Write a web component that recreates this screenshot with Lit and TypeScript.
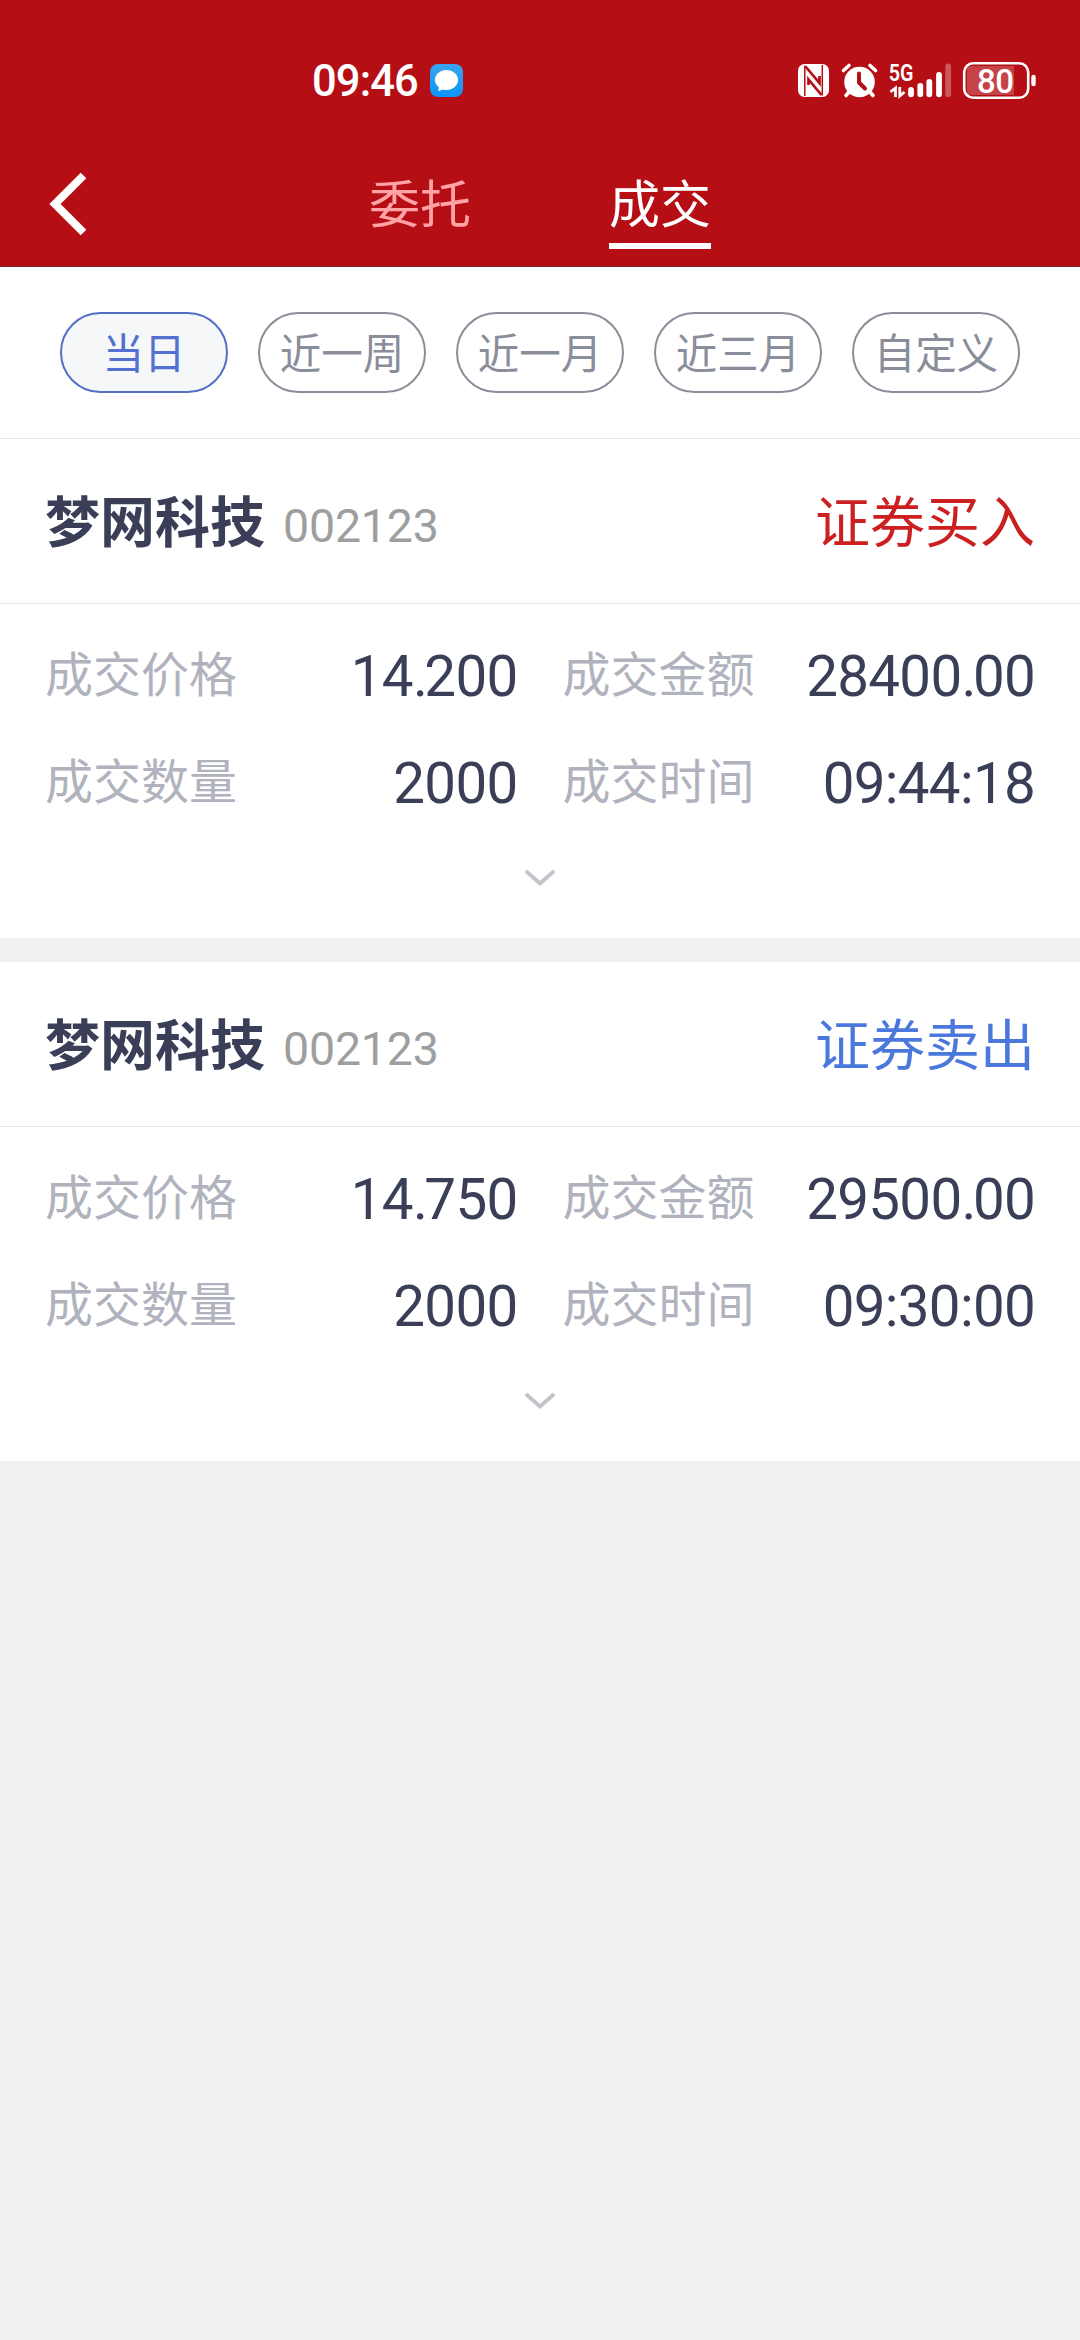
import { LitElement, html, css } from "lit";
import { customElement, property, state } from "lit/decorators.js";
import { classMap } from "lit/directives/class-map.js";

interface Trade {
  name: string;
  code: string;
  side: "buy" | "sell";
  price: string;
  amount: string;
  quantity: string;
  time: string;
}

const TRADES: Trade[] = [
  { name: "梦网科技", code: "002123", side: "buy", price: "14.200", amount: "28400.00", quantity: "2000", time: "09:44:18" },
  { name: "梦网科技", code: "002123", side: "sell", price: "14.750", amount: "29500.00", quantity: "2000", time: "09:30:00" },
];

@customElement("status-bar")
class StatusBar extends LitElement {
  static styles = css`
    :host {
      display: flex;
      justify-content: space-between;
      height: 140px;
      padding: 60px 42px 0 312px;
      box-sizing: border-box;
      color: #fff;
    }
    .left {
      display: flex;
      gap: 11px;
    }
    .clock {
      width: 107px;
      font: 500 43.500px/44px Roboto, sans-serif;
      letter-spacing: -0.900px;
      white-space: nowrap;
    }
    svg {
      display: block;
    }
    .chat {
      margin-top: 4px;
    }
    .net,
    .level {
      font-family: Roboto, sans-serif;
      fill: #fff;
    }
    .net {
      font-size: 23.5px;
      font-weight: 600;
    }
    .level {
      font-size: 33px;
      font-weight: 500;
      letter-spacing: -0.500px;
    }
  `;

  render() {
    return html`
      <div class="left">
        <div class="clock">09:46</div>
        <svg class="chat" width="33" height="33" viewBox="0 0 33 33">
          <defs>
            <linearGradient id="sky" x1="0" y1="0" x2="0" y2="1">
              <stop offset="0" stop-color="#3ba3ee" />
              <stop offset="1" stop-color="#0c95fb" />
            </linearGradient>
          </defs>
          <rect width="33" height="33" rx="8" fill="url(#sky)" />
          <path d="M16.500 6C23 6 28 10.400 28 16S23 26 16.500 26C15 26 13.800 25.800 12.700 25.400L8.300 27.200L8.800 23.300C6.500 21.500 5 19 5 16C5 10.400 10 6 16.500 6Z" fill="#fff" />
        </svg>
      </div>
      <svg width="240" height="42" viewBox="798 60 240 42">
        <rect x="798" y="64" width="31" height="33" rx="6.500" fill="#fff" />
        <path d="M804.800 65.500V96M822.300 65V95.500" stroke="#b50f15" stroke-width="1.500" />
        <path d="M805.500 66.500L819.500 83V76M821.500 95L808.500 79.500V85" fill="none" stroke="#b50f15" stroke-width="2.700" />
        <circle cx="859.500" cy="82" r="15.300" fill="#fff" />
        <path d="M843.500 70.500L849 65.500M875.500 70.500L870 65.500M849 92L846 95.500M870 92L873 95.500" stroke="#fff" stroke-width="3.600" stroke-linecap="round" />
        <path d="M859 73.500V82.500L865 88.500" fill="none" stroke="#b50f15" stroke-width="4" stroke-linecap="round" stroke-linejoin="round" />
        <text class="net" transform="translate(888.700 81) scale(.84 1)">5G</text>
        <path d="M890.500 91.800L895.500 88V97M899.800 87V96L904.500 92" fill="none" stroke="#fff" stroke-width="2.800" />
        <g stroke="#fff" stroke-width="5.800" stroke-linecap="round">
          <path d="M911 90V94.300M920.300 86V94.300M929.300 82V94.300M939 75V94.300" />
          <path d="M948.200 66.500V94.300" opacity=".3" />
        </g>
        <path d="M967 68.500Q967 66 970 66H1014V95H970Q967 95 967 92.500Z" fill="#fff" opacity=".22" />
        <rect x="964.200" y="63.200" width="64" height="34.600" rx="9" fill="none" stroke="#fff" stroke-width="2.600" />
        <path d="M1033.500 77V84" stroke="#fff" stroke-width="4.400" stroke-linecap="round" />
        <text class="level" x="977" y="92.500">80</text>
      </svg>
    `;
  }
}

@customElement("nav-bar")
class NavBar extends LitElement {
  @state() private active = 1;

  static styles = css`
    :host {
      display: grid;
      grid-template-columns: 1fr auto 1fr;
      height: 126px;
      color: #fff;
      font-family: "Noto Sans CJK SC", sans-serif;
    }
    .back {
      display: block;
      margin: 32px 0 0 49px;
    }
    .tabs {
      display: flex;
      gap: 138px;
      align-items: flex-start;
      padding-top: 26px;
    }
    .tab {
      height: 77px;
      border-bottom: 6px solid transparent;
      font-size: 51px;
      line-height: 71px;
      color: #ffa3a7;
    }
    .tab.on {
      color: #fff;
      border-color: #fff;
    }
  `;

  render() {
    return html`
      <svg class="back" width="38" height="64" viewBox="0 0 38 64">
        <path d="M34.500 3.500L6 32L34.500 60.500" fill="none" stroke="#fff" stroke-width="8" />
      </svg>
      <div class="tabs">
        ${["委托", "成交"].map(
          (label, i) => html`<div class=${classMap({ tab: true, on: i === this.active })} @click=${() => (this.active = i)}>${label}</div>`,
        )}
      </div>
    `;
  }
}

@customElement("range-filter")
class RangeFilter extends LitElement {
  @state() private active = 0;

  static styles = css`
    :host {
      display: flex;
      gap: 30px;
      padding: 45px 60px;
      background: #fff;
      border-bottom: 1px solid #e3e4e6;
      font-family: "Noto Sans CJK SC", sans-serif;
    }
    .pill {
      flex: 1;
      height: 81px;
      box-sizing: border-box;
      border: 2px solid #8a8e9a;
      border-radius: 41px;
      font-size: 41.500px;
      line-height: 74px;
      text-align: center;
      white-space: nowrap;
      color: #8a8e9a;
    }
    .pill.on {
      border-color: #526fc5;
      background: #f6f7f9;
      color: #5470d0;
    }
  `;

  render() {
    return html`${["当日", "近一周", "近一月", "近三月", "自定义"].map(
      (label, i) => html`<div class=${classMap({ pill: true, on: i === this.active })} @click=${() => (this.active = i)}>${label}</div>`,
    )}`;
  }
}

@customElement("trade-card")
class TradeCard extends LitElement {
  @property({ attribute: false }) trade!: Trade;

  static styles = css`
    :host {
      display: block;
      background: #fff;
      font-family: "Noto Sans CJK SC", sans-serif;
    }
    .head {
      display: flex;
      align-items: baseline;
      height: 164px;
      padding: 0 45px;
      border-bottom: 1px solid #e3e4e6;
      line-height: 158px;
      font-size: 55px;
    }
    .name {
      font-weight: 700;
      color: #3a3f57;
    }
    .code {
      margin-left: 18px;
      font: 400 46.500px/80px Roboto, sans-serif;
      letter-spacing: -0.200px;
      color: #9e9e9e;
    }
    .side {
      margin-left: auto;
      color: #cb1f20;
    }
    .side.sell {
      color: #4b78dc;
    }
    .fields {
      display: grid;
      grid-template-columns: 1fr 1fr;
      column-gap: 45px;
      padding: 18px 45px 0;
    }
    .field {
      display: flex;
      justify-content: space-between;
      height: 107px;
    }
    .label {
      font-size: 48px;
      line-height: 99px;
      color: #b0b3be;
    }
    .value {
      font-family: Roboto, sans-serif;
      font-size: 56.500px;
      line-height: 110px;
      letter-spacing: -0.700px;
      color: #3a3f57;
    }
    .point {
      letter-spacing: -3.500px;
    }
    .more {
      display: block;
      margin: 0 auto;
      padding: 34px 0 52px;
    }
  `;

  private field(label: string, value: string) {
    const [whole, fraction] = value.split(".");
    const shown = fraction ? html`${whole}<span class="point">.</span>${fraction}` : value;
    return html`<div class="field"><span class="label">${label}</span><span class="value">${shown}</span></div>`;
  }

  render() {
    const t = this.trade;
    return html`
      <div class="head">
        <span class="name">${t.name}</span>
        <span class="code">${t.code}</span>
        <span class=${classMap({ side: true, sell: t.side === "sell" })}>${t.side === "buy" ? "证券买入" : "证券卖出"}</span>
      </div>
      <div class="fields">
        ${this.field("成交价格", t.price)} ${this.field("成交金额", t.amount)}
        ${this.field("成交数量", t.quantity)} ${this.field("成交时间", t.time)}
      </div>
      <svg class="more" width="32" height="16" viewBox="0 0 32 16">
        <path d="M3 2L16 13.500L29 2" fill="none" stroke="#c3c4cb" stroke-width="3.800" stroke-linecap="round" />
      </svg>
    `;
  }
}

@customElement("app-root")
class AppRoot extends LitElement {
  static styles = css`
    :host {
      display: block;
      min-height: 2340px;
      background: #f1f1f1;
    }
    .top {
      height: 266px;
      background: #b50f15;
      border-bottom: 1px solid #7b2a35;
    }
    .list {
      display: flex;
      flex-direction: column;
      gap: 24px;
    }
  `;

  render() {
    return html`
      <div class="top">
        <status-bar></status-bar>
        <nav-bar></nav-bar>
      </div>
      <range-filter></range-filter>
      <div class="list">${TRADES.map((t) => html`<trade-card .trade=${t}></trade-card>`)}</div>
    `;
  }
}
